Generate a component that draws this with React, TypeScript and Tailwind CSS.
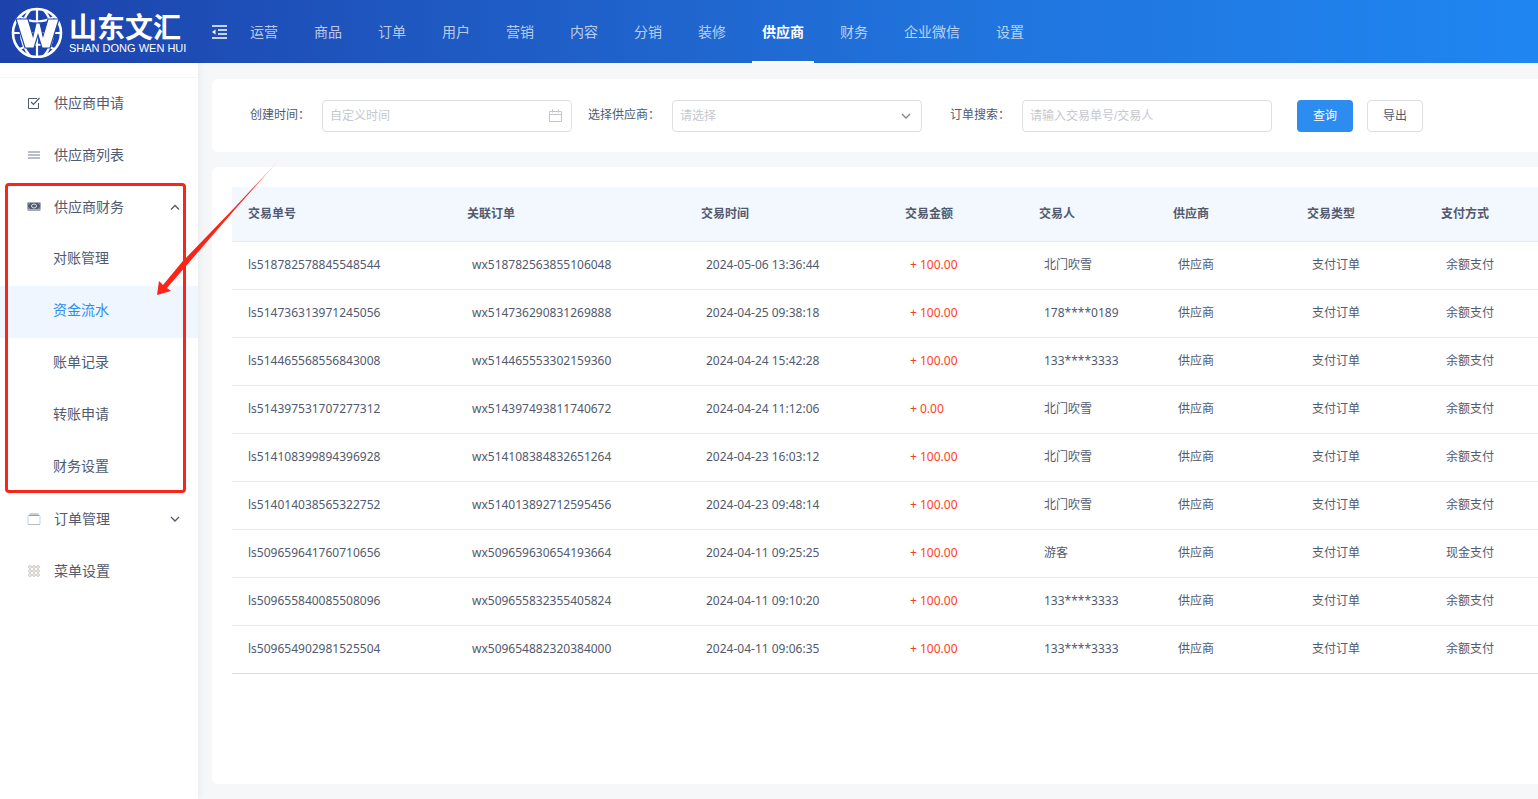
import type { ReactNode } from 'react';

const navItems = ['运营', '商品', '订单', '用户', '营销', '内容', '分销', '装修', '供应商', '财务', '企业微信', '设置'];

const financeItems = ['对账管理', '资金流水', '账单记录', '转账申请', '财务设置'];

const columns = [
  { title: '交易单号', width: 'w-[219px]' },
  { title: '关联订单', width: 'w-[234px]' },
  { title: '交易时间', width: 'w-[204px]' },
  { title: '交易金额', width: 'w-[134px]' },
  { title: '交易人', width: 'w-[134px]' },
  { title: '供应商', width: 'w-[134px]' },
  { title: '交易类型', width: 'w-[134px]' },
  { title: '支付方式', width: '' },
];

const rows = [
  ['ls518782578845548544', 'wx518782563855106048', '2024-05-06 13:36:44', '+ 100.00', '北门吹雪', '供应商', '支付订单', '余额支付'],
  ['ls514736313971245056', 'wx514736290831269888', '2024-04-25 09:38:18', '+ 100.00', '178****0189', '供应商', '支付订单', '余额支付'],
  ['ls514465568556843008', 'wx514465553302159360', '2024-04-24 15:42:28', '+ 100.00', '133****3333', '供应商', '支付订单', '余额支付'],
  ['ls514397531707277312', 'wx514397493811740672', '2024-04-24 11:12:06', '+ 0.00', '北门吹雪', '供应商', '支付订单', '余额支付'],
  ['ls514108399894396928', 'wx514108384832651264', '2024-04-23 16:03:12', '+ 100.00', '北门吹雪', '供应商', '支付订单', '余额支付'],
  ['ls514014038565322752', 'wx514013892712595456', '2024-04-23 09:48:14', '+ 100.00', '北门吹雪', '供应商', '支付订单', '余额支付'],
  ['ls509659641760710656', 'wx509659630654193664', '2024-04-11 09:25:25', '+ 100.00', '游客', '供应商', '支付订单', '现金支付'],
  ['ls509655840085508096', 'wx509655832355405824', '2024-04-11 09:10:20', '+ 100.00', '133****3333', '供应商', '支付订单', '余额支付'],
  ['ls509654902981525504', 'wx509654882320384000', '2024-04-11 09:06:35', '+ 100.00', '133****3333', '供应商', '支付订单', '余额支付'],
];

function Chevron({ up = false }: { up?: boolean }) {
  return (
    <svg width="10" height="10" viewBox="0 0 10 10" fill="none" stroke="currentColor" strokeWidth="1.3">
      <path d={up ? 'M1 7.500l4-4 4 4' : 'M1 3l4 4 4-4'} />
    </svg>
  );
}

function Logo() {
  return (
    <a href="#" className="flex w-[198px] shrink-0 items-center gap-[6px] pl-[11px]">
      <svg width="52" height="52" viewBox="0 0 52 52" fill="none" stroke="#fff" strokeWidth="2.2" className="shrink-0">
        <circle cx="26" cy="27" r="24" strokeWidth="2.6" />
        <path d="M26 3v48M2 27h48M9 11q17 9 34 0M9 43q17-9 34 0" />
        <path d="M19 4Q1 27 19 50M33 4q18 23 0 46" />
        <path
          d="M5 13h12l5 17 3-13h4l3 13 5-17h11l-9 29h-8l-4-13-4 13h-9z"
          fill="#fff"
          stroke="#1f47b0"
          strokeWidth="1.2"
        />
      </svg>
      <span className="flex flex-col pt-[7px] text-white">
        <span className="text-[28px] leading-[26px] font-bold">山东文汇</span>
        <span className="text-[11px] leading-[12px] whitespace-nowrap">SHAN DONG WEN HUI</span>
      </span>
    </a>
  );
}

function Header() {
  return (
    <header className="flex h-[63px] bg-linear-[90deg,#1d42ab,#2173dc_62%,#1f86f1]">
      <Logo />
      <button type="button" aria-label="收起菜单" className="ml-[14px] text-white">
        <svg width="15" height="14" viewBox="0 0 15 14" fill="none" stroke="currentColor" strokeWidth="1.6">
          <path d="M0 1h15M6 5h9M6 9h9M0 13h15" />
          <path d="M0 7l3.500-2.500v5z" fill="currentColor" stroke="none" />
        </svg>
      </button>
      <nav className="ml-[13px] flex gap-4">
        {navItems.map((item) => (
          <a
            key={item}
            href="#"
            className={`flex items-center border-y-2 border-t-transparent px-[10px] text-sm whitespace-nowrap ${
              item === '供应商' ? 'border-b-white font-bold text-white' : 'border-b-transparent text-white/70'
            }`}
          >
            {item}
          </a>
        ))}
      </nav>
    </header>
  );
}

function MenuItem({ icon, label, arrow }: { icon: ReactNode; label: string; arrow?: 'up' | 'down' }) {
  return (
    <a href="#" className="flex h-[52px] items-center pr-[18px] pb-[2px] pl-[27px]">
      <span className="mr-[13px] flex w-[14px] justify-center">{icon}</span>
      <span className="flex-1">{label}</span>
      {arrow && <Chevron up={arrow === 'up'} />}
    </a>
  );
}

function Sidebar() {
  return (
    <aside className="relative z-10 w-[198px] shrink-0 bg-white pt-[14px] text-sm shadow-[2px_0_8px_rgba(29,35,41,0.05)]">
      <nav className="border-t border-[#f5f5f5]">
        <MenuItem
          label="供应商申请"
          icon={
            <svg width="12" height="12" viewBox="0 0 12 12" fill="none" stroke="currentColor">
              <path d="M9 1.500H.5v10h10V6" />
              <path d="M3 5l2.500 2.500L11.500 1" strokeWidth="1.200" />
            </svg>
          }
        />
        <MenuItem
          label="供应商列表"
          icon={
            <svg width="12" height="8" viewBox="0 0 12 8" stroke="currentColor">
              <path d="M0 1h12M0 4h12M0 7h12" strokeWidth="0.8" />
            </svg>
          }
        />
        <MenuItem
          label="供应商财务"
          arrow="up"
          icon={
            <svg width="14" height="10" viewBox="0 0 14 10">
              <path d="M.5.500h13v7H.5z" fill="currentColor" />
              <path d="M.5 8.500h13" stroke="#a3a8b4" />
              <ellipse cx="7" cy="4" rx="2.500" ry="2" fill="none" stroke="#fff" strokeWidth=".8" />
              <path d="M1 2.500 3 1M11 1l2 1.500M1 5.500 3 7M11 7l2-1.500" stroke="#fff" strokeWidth=".4" />
            </svg>
          }
        />
        {financeItems.map((item) => (
          <a
            key={item}
            href="#"
            className={`flex h-[52px] items-center pb-1 pl-[53px] ${item === '资金流水' ? 'bg-[#f0f6ff] text-[#2d8cf0]' : ''}`}
          >
            {item}
          </a>
        ))}
        <MenuItem
          label="订单管理"
          arrow="down"
          icon={
            <svg width="14" height="12" viewBox="0 0 14 12" fill="none">
              <path d="M2.500 1h9M1.500 2.500h11" stroke="#9a9da5" />
              <path d="M1 3v8M13 3v8" stroke="#b5d5ec" />
              <path d="M1 11.500h12" stroke="#b9bcc2" />
            </svg>
          }
        />
        <MenuItem
          label="菜单设置"
          icon={
            <svg width="12" height="12" viewBox="0 0 12 12" fill="none" stroke="#b3aaa2" strokeWidth=".7">
              {[2, 6, 10].map((y) => [2, 6, 10].map((x) => <circle key={`${x}-${y}`} cx={x} cy={y} r="1.400" />))}
            </svg>
          }
        />
      </nav>
    </aside>
  );
}

function Filters() {
  const field = 'h-8 w-full appearance-none rounded border border-[#dcdee2] bg-white px-[7px] outline-none placeholder:text-[#c5c8ce]';
  const label = 'h-[30px] w-[72px] text-right leading-[30px] whitespace-nowrap';
  return (
    <form className="flex rounded-l-md bg-white pt-[21px] pb-5 pl-[26px]">
      <div className="flex gap-4">
        <div className="flex gap-3">
          <label htmlFor="created" className={label}>创建时间：</label>
          <div className="relative w-[250px]">
            <input id="created" type="text" placeholder="自定义时间" className={field} />
            <svg width="14" height="14" viewBox="0 0 14 14" fill="none" stroke="#c3c5ce" className="absolute top-[9px] right-[9px]">
              <path d="M.5 2.500h12v10H.5zM.5 5.500h12M3.500.500v3M9.500.500v3" />
            </svg>
          </div>
        </div>
        <div className="flex gap-3">
          <label htmlFor="supplier" className={label}>选择供应商：</label>
          <div className="relative w-[250px] text-[#808695]">
            <select id="supplier" defaultValue="" className={`${field} text-[#c5c8ce]`}>
              <option value="">请选择</option>
            </select>
            <span className="pointer-events-none absolute top-[11px] right-[11px]">
              <Chevron />
            </span>
          </div>
        </div>
        <div className="flex gap-3">
          <label htmlFor="keyword" className={label}>订单搜索：</label>
          <div className="w-[250px]">
            <input id="keyword" type="text" placeholder="请输入交易单号/交易人" className={field} />
          </div>
        </div>
      </div>
      <div className="ml-[25px] flex gap-[14px]">
        <button type="button" className="h-8 w-14 rounded bg-[#2d8cf0] text-white">查询</button>
        <button type="button" className="h-8 w-14 rounded border border-[#dcdee2]">导出</button>
      </div>
    </form>
  );
}

function RecordTable() {
  return (
    <table className="w-full table-fixed border-separate border-spacing-0 text-left font-['Noto_Sans','Noto_Sans_CJK_SC',sans-serif] whitespace-nowrap">
      <thead>
        <tr className="h-[55px] bg-[#f3f8fe]">
          {columns.map((col) => (
            <th key={col.title} className={`border-b border-[#e8eaec] pl-4 font-bold ${col.width}`}>
              {col.title}
            </th>
          ))}
        </tr>
      </thead>
      <tbody>
        {rows.map((row) => (
          <tr key={row[0]} className="group h-12">
            {row.map((cell, i) => (
              <td
                key={columns[i].title}
                className={`border-b border-[#e8eaec] pb-[2px] group-last:border-[#dcdee2] ${i === 0 ? 'pl-4' : 'pl-[21px]'} ${
                  i === 3 ? 'text-[#ff4020]' : ''
                }`}
              >
                {cell}
              </td>
            ))}
          </tr>
        ))}
      </tbody>
    </table>
  );
}

export default function App() {
  return (
    <div className="relative flex min-h-screen flex-col overflow-hidden bg-[#f5f7f9] font-['Liberation_Sans','Noto_Sans_CJK_SC',sans-serif] text-xs text-[#515a6e]">
      <Header />
      <div className="flex flex-1">
        <Sidebar />
        <main className="flex min-w-0 flex-1 flex-col gap-[15px] pt-4 pb-[15px] pl-[14px]">
          <Filters />
          <section className="flex-1 rounded-l-md bg-white pt-5 pl-5">
            <RecordTable />
          </section>
        </main>
      </div>

      <div className="pointer-events-none absolute top-[183px] left-[5px] z-20 h-[310px] w-[181px] rounded border-3 border-[#fb2418]" />
      <svg width="124" height="138" viewBox="0 0 124 138" className="pointer-events-none absolute top-[160px] left-[156px] z-20">
        <defs>
          <linearGradient id="tail" gradientUnits="userSpaceOnUse" x1="122" y1="1" x2="92" y2="34">
            <stop offset="0" stopColor="#fb2418" stopOpacity="0.3" />
            <stop offset="1" stopColor="#fb2418" />
          </linearGradient>
        </defs>
        <path d="M122 1 80 46 26 102 7 125 3 121 1 135l14-4-4-3 19-22 51-59z" fill="url(#tail)" />
      </svg>
    </div>
  );
}
